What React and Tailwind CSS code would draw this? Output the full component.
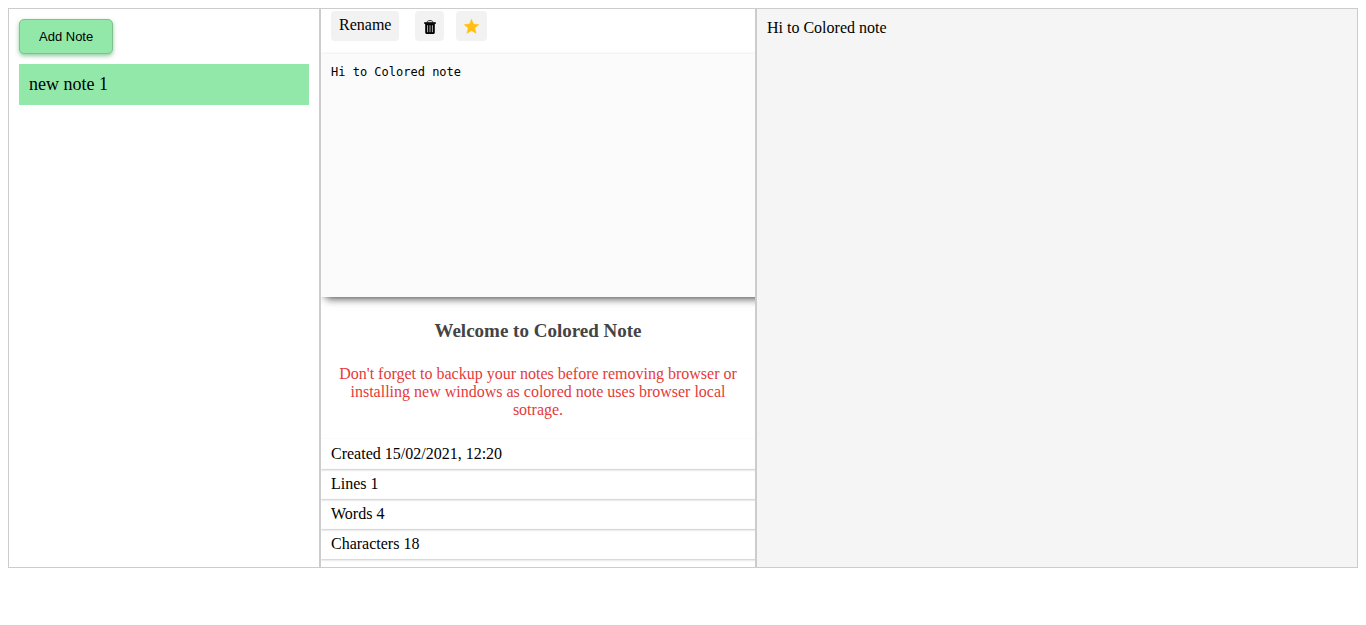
import { useState } from "react";

const TrashIcon = () => (
  <svg viewBox="0 0 12 14" className="h-3.5 w-3" aria-hidden="true">
    <path d="M3 2.500C3.200 1 4.200.6 6 .6s2.800.4 3 1.900" fill="none" stroke="#333" strokeWidth="1" />
    <path d="M.2 2.200h11.600v1.700H.2z" fill="#000" />
    <path d="M1.200 3.500h9.600v9c0 .9-.6 1.500-1.400 1.500H2.600c-.8 0-1.400-.6-1.400-1.500z" fill="#000" />
    <path d="M3.600 5.200v7M6 5.200v7M8.400 5.200v7" stroke="#e4e4e4" strokeWidth=".8" />
  </svg>
);

const StarIcon = () => (
  <svg viewBox="0 0 15 15" className="size-[15px]" aria-hidden="true">
    <path
      d="M7.500 0 9.600 5 15 5.500 10.900 9.100 12.200 14.500 7.500 11.700 2.800 14.500 4.100 9.100 0 5.500 5.400 5z"
      fill="#ffc013"
      stroke="#ffc013"
      strokeWidth=".3"
      strokeLinejoin="round"
    />
  </svg>
);

const toolButton = "flex h-[30px] cursor-pointer items-center rounded bg-[#f2f2f2]";

export default function App() {
  const [text, setText] = useState("Hi to Colored note");
  const words = text.trim() ? text.trim().split(/\s+/).length : 0;
  const stats = [
    "Created 15/02/2021, 12:20",
    `Lines ${text.split("\n").length}`,
    `Words ${words}`,
    `Characters ${text.length}`,
  ];

  return (
    <main className="m-2 grid grid-cols-[312fr_436fr_602fr] bg-white font-['Liberation_Serif',serif] text-base text-black">
      <nav className="min-w-0 border border-[#ccc] p-2.5" aria-label="Notes">
        <button
          type="button"
          className="block h-[35px] cursor-pointer rounded-[5px] border border-[#7fc08e] bg-[#92e8a9] px-[19px] font-['Liberation_Sans',sans-serif] text-[13px] shadow-[0_2px_4px_rgba(40,150,70,0.5)]"
        >
          Add Note
        </button>
        <ul className="mt-2.5">
          <li>
            <a href="#note-1" className="block bg-[#92e8a9] px-2.5 py-2 text-lg leading-[25px]">
              new note 1
            </a>
          </li>
        </ul>
      </nav>

      <section className="min-w-0 overflow-hidden border border-[#ccc] pb-2">
        <div className="flex h-[45px] items-start px-2.5 pt-0.5">
          <button type="button" className={`${toolButton} mr-4 px-2 pb-0.5`}>
            Rename
          </button>
          <button type="button" aria-label="Delete note" className={`${toolButton} mr-3 pt-0.5 pr-2 pl-[9px]`}>
            <TrashIcon />
          </button>
          <button type="button" aria-label="Favourite note" className={`${toolButton} px-2`}>
            <StarIcon />
          </button>
        </div>
        <textarea
          aria-label="Note text"
          value={text}
          onChange={(e) => setText(e.target.value)}
          spellCheck={false}
          className="relative block h-[243px] w-[calc(100%+20px)] resize-none bg-[#fbfbfb] py-2.5 pr-[30px] pl-2.5 font-['DejaVu_Sans_Mono',monospace] text-xs leading-4 shadow-[0_0_3px_rgba(0,0,0,0.12),0_7px_8px_-5px_rgba(0,0,0,0.65)] outline-none"
        />
        <div className="px-2.5 pt-6 pb-5 text-center">
          <h1 className="text-[19px] leading-5 font-bold text-[#444]">Welcome to Colored Note</h1>
          <p className="mt-6 text-base leading-[18px] text-[#e53a3a]">
            Don't forget to backup your notes before removing browser or installing new windows as colored note
            uses browser local sotrage.
          </p>
        </div>
        <ul className="-mr-5">
          {stats.map((line) => (
            <li
              key={line}
              className="h-[30px] px-2.5 leading-[30px] shadow-[0_1px_2px_rgba(0,0,0,0.22)]"
            >
              {line}
            </li>
          ))}
        </ul>
      </section>

      <article className="min-w-0 border border-[#ccc] bg-[#f5f5f5] p-2.5 leading-[18px]">{text}</article>
    </main>
  );
}
